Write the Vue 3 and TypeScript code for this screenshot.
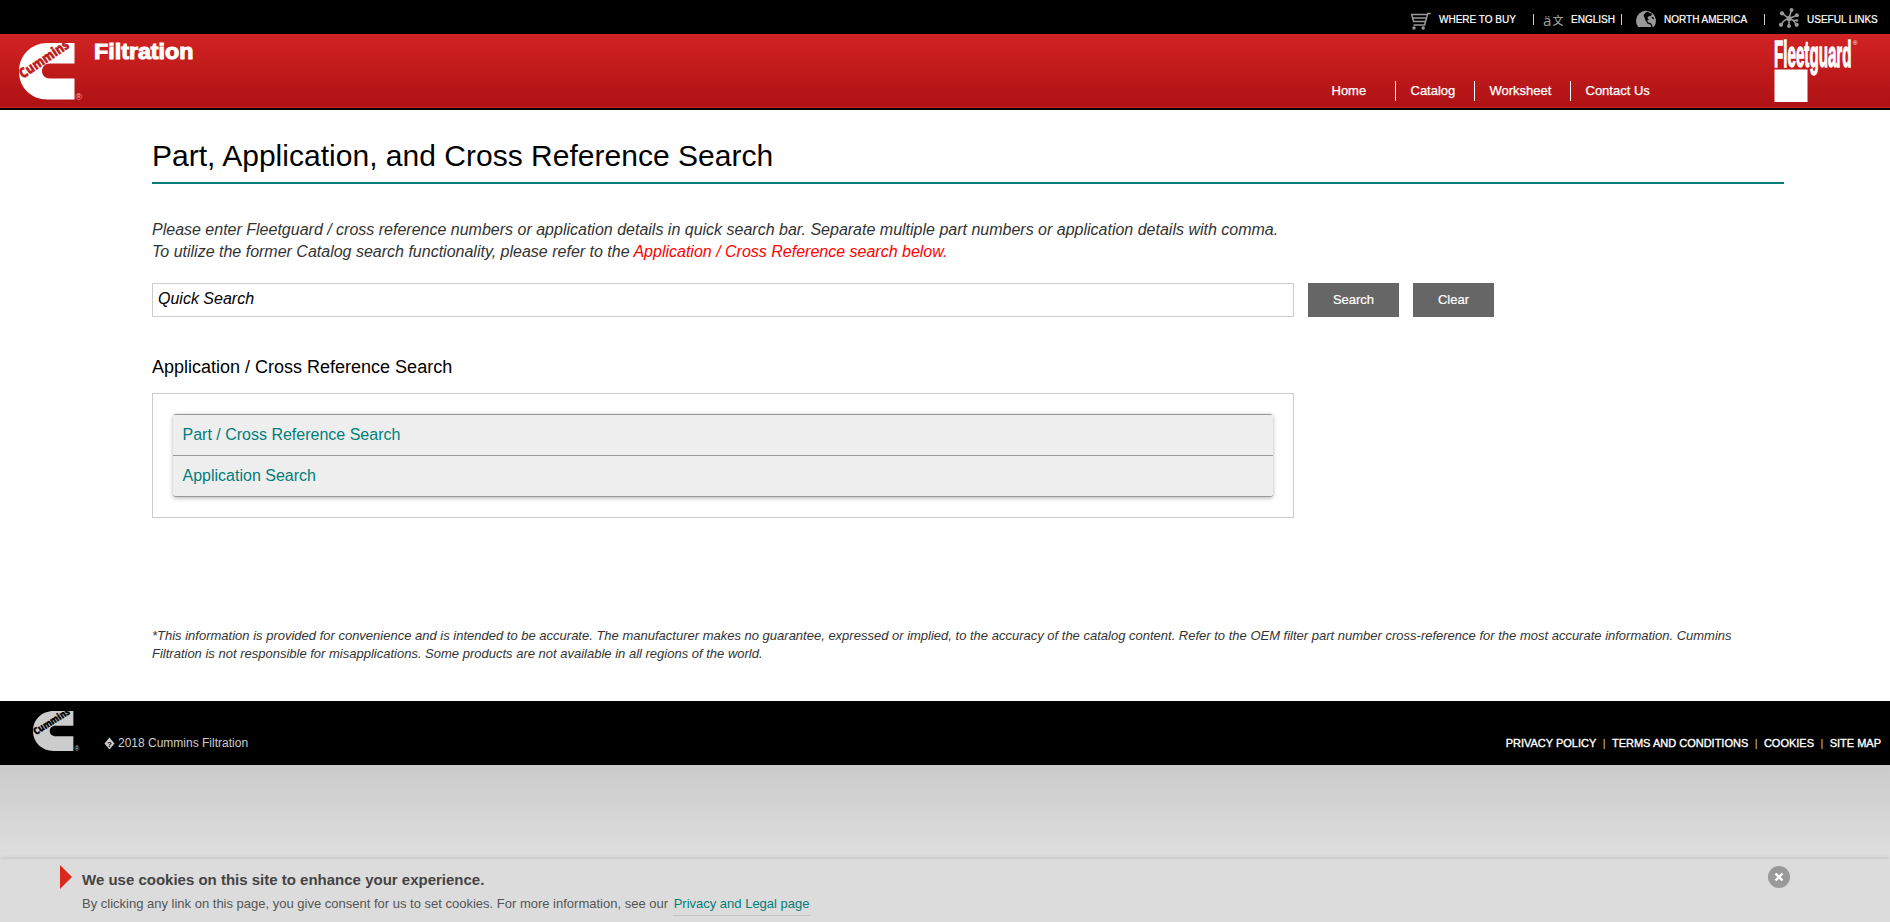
<script setup lang="ts">
const navItems: string[] = ['Home', 'Catalog', 'Worksheet', 'Contact Us']
const footerLinks: string[] = ['PRIVACY POLICY', 'TERMS AND CONDITIONS', 'COOKIES', 'SITE MAP']
const panels: string[] = ['Part / Cross Reference Search', 'Application Search']
</script>

<template>
  <div class="page">
    <div class="topbar">
      <a class="util buy">
        <svg class="cart" width="22" height="18" viewBox="0 0 22 18" fill="none" stroke="#999" stroke-width="1.5">
          <path d="M19.800 1.500h-3L13.600 13H2.500M0 2.400h16M.7 2.400l1.900 7h11.500M1.800 6h13" />
          <circle cx="3" cy="16" r="1.700" fill="#999" stroke="none" />
          <circle cx="12.200" cy="16" r="1.700" fill="#999" stroke="none" />
        </svg>
        <span>WHERE TO BUY</span>
      </a>
      <i class="bar"></i>
      <a class="util lang">
        <b class="glyphs">ä<em>文</em></b>
        <span>ENGLISH</span>
      </a>
      <i class="bar"></i>
      <a class="util region">
        <svg class="globe" width="21" height="16" viewBox="0 0 21 16">
          <path fill="#999" d="M2.200 16a10 10 0 1 1 15.600 0z" />
          <path fill="#000" d="M7.500 4.500L9.300 1.800l2.500-1 2 1.300 2.400.6-1.400 2.200-2.200.3-1.200 2 1.600 1.600-2 .6 1.200 2 2.500.6 1.500 2.200.5 1.800h-1.300l-1-2.400-2.600-.7-2.100-3.200-1-2.500z" />
          <path fill="#000" d="M15.300 5.700l2.200.5.5 2.100-1.700-.5z" />
        </svg>
        <span>NORTH AMERICA</span>
      </a>
      <i class="bar"></i>
      <a class="util links">
        <svg class="hub" width="21" height="20" viewBox="0 0 21 20" stroke="#999" stroke-width="1.500" fill="#999">
          <path fill="none" d="M10 10.500L3 5.300M10 10.500l2.500-8.500M10 10.500l7.700-3M10 10.500l-4.500 1.800-3.800 4.400M10 10.500V18M10 10.500l4 1.800 3.700 4.400M14 12.300l3.800.200" />
          <circle cx="10" cy="10.500" r="1.800" />
          <g stroke="none">
            <circle cx="3" cy="5.300" r="2.100" /><circle cx="12.500" cy="2" r="2" />
            <circle cx="17.900" cy="7.300" r="2" /><circle cx="18" cy="12.500" r="1.200" />
            <circle cx="2" cy="16.800" r="2.100" /><circle cx="10" cy="18" r="1.900" />
            <circle cx="17.700" cy="16.800" r="2.100" />
          </g>
        </svg>
        <span>USEFUL LINKS</span>
      </a>
    </div>

    <header class="header">
      <svg class="brand" width="66" height="60" viewBox="0 0 66 60">
        <path fill="#fff" d="M55.500 0H28.500C12 0 0 12.500 0 28.500S12 56.500 28.500 56.500H55.500V35.500H31c-5 0-8-3.300-8-7.500s3-7.500 8-7.500h24.500z" />
        <text transform="translate(4 36) rotate(-34)" textLength="57" lengthAdjust="spacingAndGlyphs" class="brand-name" fill="#c01b1b" stroke="#c01b1b">Cummins</text>
        <text x="56.500" y="56.500" class="reg">®</text>
      </svg>
      <svg class="division" width="104" height="22" viewBox="0 0 104 22">
        <text transform="translate(1 16.500) scale(1 1.080)" textLength="99.500" lengthAdjust="spacingAndGlyphs">Filtration</text>
      </svg>
      <nav class="nav">
        <a v-for="item in navItems" :key="item">{{ item }}</a>
      </nav>
      <svg class="fleet" width="88" height="66" viewBox="0 0 88 66">
        <text transform="translate(0 27) scale(1 2.600)" textLength="77.500" lengthAdjust="spacingAndGlyphs">Fleetguard</text>
        <text x="79" y="5" class="fleet-reg">®</text>
        <path fill="#fff" d="M.5 29.500h33V62H.500z" />
      </svg>
    </header>

    <main class="content">
      <h1>Part, Application, and Cross Reference Search</h1>
      <p class="intro">
        Please enter Fleetguard / cross reference numbers or application details in quick search bar. Separate multiple part numbers or application details with comma.<br />
        To utilize the former Catalog search functionality, please refer to the <span>Application / Cross Reference search below.</span>
      </p>
      <div class="search">
        <input type="text" placeholder="Quick Search" />
        <button>Search</button>
        <button class="clear">Clear</button>
      </div>
      <h2>Application / Cross Reference Search</h2>
      <div class="box">
        <div class="accordion">
          <a v-for="panel in panels" :key="panel">{{ panel }}</a>
        </div>
      </div>
      <p class="note">*This information is provided for convenience and is intended to be accurate. The manufacturer makes no guarantee, expressed or implied, to the accuracy of the catalog content. Refer to the OEM filter part number cross-reference for the most accurate information. Cummins<br /> Filtration is not responsible for misapplications. Some products are not available in all regions of the world.</p>
    </main>

    <footer class="footer">
      <svg class="foot-logo" width="48" height="42" viewBox="0 0 66 60" preserveAspectRatio="none">
        <path fill="#ccc" d="M55.500 0H28.500C12 0 0 12.500 0 28.500S12 57 28.500 57H55.500V36H31c-5 0-8-3.300-8-7.500S26 21 31 21h24.500z" />
        <text transform="translate(4 34.500) rotate(-33)" textLength="57" lengthAdjust="spacingAndGlyphs" class="brand-name" fill="#000" stroke="#000">Cummins</text>
        <text x="57" y="57" class="reg dim">®</text>
      </svg>
      <span class="copy">
        <svg class="unknown" width="11" height="13" viewBox="0 0 11 13">
          <path d="M5.500.5l5 6-5 6-5-6z" fill="#ccc" />
          <text x="5.500" y="9.500" text-anchor="middle">?</text>
        </svg>
        2018 Cummins Filtration
      </span>
      <div class="foot-links">
        <template v-for="(link, i) in footerLinks" :key="link">
          <i v-if="i > 0">|</i><a>{{ link }}</a>
        </template>
      </div>
    </footer>

    <div class="backdrop"></div>

    <section class="cookie">
      <svg class="arrow" width="12" height="24" viewBox="0 0 12 24"><path d="M0 0l12 12L0 24z" fill="#da291c" /></svg>
      <div class="cookie-text">
        <strong>We use cookies on this site to enhance your experience.</strong>
        <p>By clicking any link on this page, you give consent for us to set cookies. For more information, see our <a>Privacy and Legal page</a></p>
      </div>
      <svg class="close" width="22" height="22" viewBox="0 0 22 22">
        <circle cx="11" cy="11" r="11" fill="#999" />
        <path d="M7.500 7.500l7 7M14.500 7.500l-7 7" stroke="#fff" stroke-width="2.400" />
      </svg>
    </section>
  </div>
</template>

<style>
body {
  margin: 0;
  overflow: hidden;
}
</style>

<style scoped>
.page {
  width: 1890px;
  height: 922px;
  display: flex;
  flex-direction: column;
  background: #fff;
  font-family: "Liberation Sans", Arial, sans-serif;
  overflow: hidden;
}
.page * {
  box-sizing: border-box;
}
svg {
  display: block;
  flex: none;
  overflow: visible;
}
.topbar {
  height: 34px;
  flex: none;
  background: #000;
  display: flex;
  padding-left: 1411px;
  color: #fff;
  font-size: 10px;
  white-space: nowrap;
}
.util {
  display: flex;
  align-items: flex-start;
  flex: none;
}
.util span {
  margin-top: 14px;
  line-height: 12px;
  -webkit-text-stroke: 0.2px #fff;
}
.buy {
  width: 122px;
}
.cart {
  margin: 12px 6px 0 0;
}
.bar {
  width: 1px;
  height: 11px;
  margin-top: 14px;
  background: #ccc;
  flex: none;
}
.lang {
  width: 87px;
  padding-left: 9px;
}
.glyphs {
  width: 28px;
  display: flex;
  color: #999;
  font: 15px/20px "Noto Sans", sans-serif;
  margin-top: 10px;
}
.glyphs em {
  font: 500 11px/21px "Noto Sans CJK SC", sans-serif;
  margin-left: 1px;
}
.region {
  width: 142px;
  padding-left: 14px;
}
.globe {
  margin: 11px 7px 0 0;
}
.links {
  padding-left: 14px;
}
.hub {
  margin: 8px 7px 0 0;
}
.header {
  height: 76px;
  flex: none;
  display: flex;
  background: linear-gradient(#d22323, #ae1214 73px, #cc2020 73px, #cc2020 74px, #000 74px);
}
.brand {
  margin: 9px 0 0 19px;
}
.brand-name {
  font: 800 14px "Open Sans", sans-serif;
  stroke-width: 0.4px;
}
.reg {
  font: 9px "Liberation Sans", sans-serif;
  fill: #f0b8b8;
}
.reg.dim {
  fill: #ccc;
}
.division {
  margin: 8px 1px 0 8px;
}
.division text {
  font: bold 21px "Liberation Sans", sans-serif;
  fill: #fff;
  stroke: #fff;
  stroke-width: 1px;
}
.nav {
  display: flex;
  margin: 47px 0 0 1119px;
  width: 457px;
  flex: none;
  height: 20px;
  color: #fff;
  font-size: 13px;
  line-height: 19px;
  white-space: nowrap;
  -webkit-text-stroke: 0.25px #fff;
}
.nav a {
  width: 79px;
  padding-left: 14.500px;
}
.nav a:first-child {
  width: 78px;
}
.nav a:nth-child(3) {
  width: 96px;
}
.nav a + a {
  border-left: 1px solid #fff;
}
.fleet {
  margin-top: 6px;
}
.fleet text {
  font: bold 14.500px "Liberation Sans", sans-serif;
  fill: #fff;
  stroke: #fff;
  stroke-width: 0.500px;
}
.fleet text.fleet-reg {
  font: 6px "Liberation Sans", sans-serif;
  stroke: none;
}
.content {
  height: 591px;
  flex: none;
  padding: 26px 106px 0 152px;
}
h1 {
  margin: 0;
  height: 48px;
  border-bottom: 2px solid #007e7a;
  font-size: 30px;
  line-height: 40px;
  font-weight: 400;
  letter-spacing: 0.02px;
}
.intro {
  margin: 35px 0 0;
  font-size: 16px;
  line-height: 22px;
  font-style: italic;
  color: #333;
  white-space: nowrap;
}
.intro span {
  color: #f00;
}
.search {
  display: flex;
  gap: 14px;
  margin-top: 20px;
  height: 34px;
}
input {
  width: 1142px;
  border: 1px solid #ccc;
  padding: 0 5px 3px;
  font: italic 16px "Liberation Sans", Arial, sans-serif;
  color: #000;
}
input::placeholder {
  color: #000;
  opacity: 1;
}
button {
  width: 91px;
  border: 0;
  padding: 0 0 2px;
  background: #666;
  color: #fff;
  font: 13px "Liberation Sans", Arial, sans-serif;
  -webkit-text-stroke: 0.2px #fff;
}
button.clear {
  width: 81px;
}
h2 {
  margin: 38px 0 14px;
  font-size: 18px;
  line-height: 24px;
  font-weight: 400;
}
.box {
  width: 1142px;
  height: 125px;
  border: 1px solid #ccc;
  padding: 20px;
}
.accordion {
  height: 83px;
  background: #eee;
  border-bottom: 1px solid #999;
  border-radius: 3px;
  box-shadow: 0 1px 4px rgba(0, 0, 0, 0.3);
  overflow: hidden;
}
.accordion a {
  display: block;
  height: 41px;
  padding-left: 9.500px;
  border-top: 1px solid #999;
  color: #007e7a;
  font-size: 16px;
  line-height: 39px;
}
.note {
  margin: 109px 0 0;
  font-size: 13px;
  line-height: 18px;
  font-style: italic;
  color: #333;
  white-space: nowrap;
}
.footer {
  height: 64px;
  flex: none;
  background: #000;
  display: flex;
  color: #ccc;
}
.foot-logo {
  margin: 10px 0 0 33px;
}
.copy {
  display: flex;
  gap: 3px;
  margin: 34px 0 0 23px;
  font-size: 12px;
  line-height: 16px;
  white-space: nowrap;
}
.unknown {
  margin-top: 2px;
}
.unknown text {
  font: bold 8px "Liberation Sans", sans-serif;
  fill: #000;
}
.foot-links {
  margin: 35px 9px 0 auto;
  font-size: 11px;
  line-height: 14px;
  color: #fff;
  display: flex;
  white-space: nowrap;
}
.foot-links a {
  -webkit-text-stroke: 0.35px #fff;
}
.foot-links i {
  font-style: normal;
  color: #ccc;
  margin: 0 6.400px;
}
.backdrop {
  height: 94px;
  flex: none;
  background: linear-gradient(#cbcbcb, #dfdfdf);
}
.cookie {
  height: 63px;
  flex: none;
  background: #dcdcdc;
  box-shadow: 0 0 5px rgba(0, 0, 0, 0.2);
  display: flex;
  padding-left: 60px;
}
.arrow {
  margin-top: 6px;
}
.cookie-text {
  margin: 12px 0 0 10px;
  color: #444;
  width: 1686px;
}
.cookie-text strong {
  display: block;
  font-size: 15px;
  line-height: 18px;
}
.cookie-text p {
  margin: 5px 0 0;
  font-size: 13px;
  line-height: 20px;
  color: #555;
}
.cookie-text a {
  color: #007e7a;
  border-bottom: 1px solid #c4c4c4;
  padding: 0 1px 4px;
  margin-left: 1px;
}
.close {
  margin-top: 7px;
}
</style>
